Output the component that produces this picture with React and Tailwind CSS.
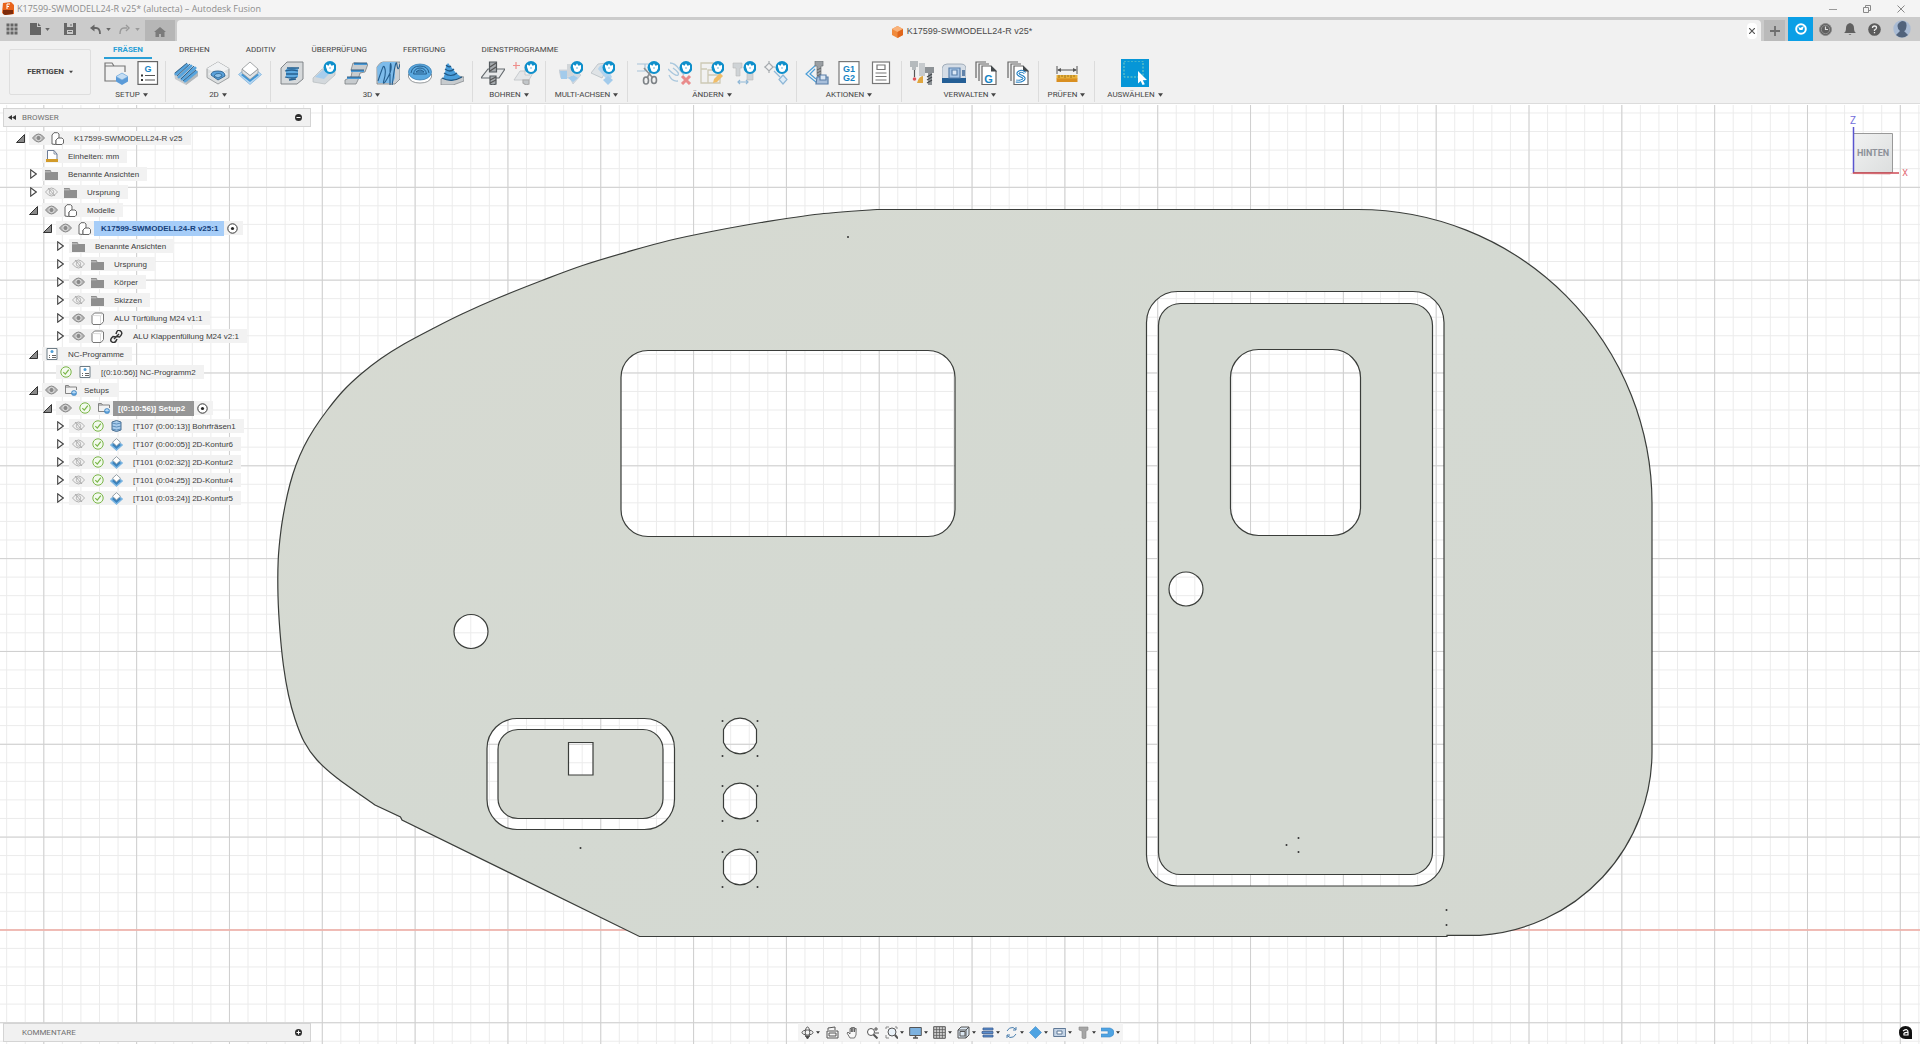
import React from "react";

const MID = "#6b7075";
const BLUE = "#5aa2dc";
const ACCENT = "#0e8fcb";

function Icon({ children, className = "size-6", box = "0 0 24 24" }) {
  return (
    <svg viewBox={box} className={`shrink-0 ${className}`} fill="none" stroke={MID} strokeWidth="1.2" aria-hidden="true">
      {children}
    </svg>
  );
}

function Caret({ className = "h-[4px] w-[6px]" }) {
  return (
    <svg viewBox="0 0 6 4" className={`shrink-0 ${className}`} fill="currentColor" aria-hidden="true">
      <path d="M0 0h6L3 4z" />
    </svg>
  );
}

// Extension badge that sits in the upper right corner of a tool icon
function Badge() {
  return (
    <g stroke="none">
      <circle cx="18" cy="6.500" r="6.500" fill={ACCENT} />
      <path d="M14 6V3.500l2.500 1.200L18 2.500l1.500 2.200L22 4v3.500l-1.500 2.700q-2.500 1.500-5 0z" fill="#fff" />
      <circle cx="18" cy="7" r="1" fill="#9fd0ea" />
    </g>
  );
}

/* ---------- ribbon icons ---------- */

const SetupIcon = () => (
  <Icon>
    <path d="M12 20H1V2h7l2 3h11v6M1 5h9" stroke="#777" />
    <path d="m18 12 6 3.500v5L18 24l-6-3.500v-5z" fill="#5b9bd8" stroke="none" />
    <path d="m18 12 6 3.500-6 3.500-6-3.500z" fill="#c4ddf3" stroke="#6fa7db" strokeWidth=".6" />
  </Icon>
);

const GSheetIcon = () => (
  <Icon>
    <rect x="2" y=".6" width="19.500" height="22.800" fill="#fff" stroke="#666" />
    <text x="12" y="10.500" textAnchor="middle" fontSize="9" fontWeight="700" fill="#1583c4" stroke="none" fontFamily="Liberation Sans, sans-serif">G</text>
    <path d="M9 14.500h10M9 19h10" stroke="#555" />
    <path d="M5 14.500h2M5 19h2" stroke="#333" strokeWidth="2" />
  </Icon>
);

const AdaptiveIcon = () => (
  <Icon>
    <path d="m0 12 11-9 13 7v5l-12 9L1 18z" fill="#c6cacd" stroke="none" />
    <path d="m12 24 12-9v-5L13 19z" fill="#b3b8bb" stroke="none" />
    <path d="m2 13 11-9M5 16 17 5M8 18 21 7M11 20 22 11" stroke="#57a4dd" strokeWidth="3" strokeLinecap="round" />
    <path d="m1 12 12-10M3 15 16 3M7 18 20 5M9 20 22 9" stroke="#2f5a80" strokeWidth=".9" />
  </Icon>
);

const PocketIcon = () => (
  <Icon>
    <path d="m12 1 11 6.500v9L12 23 1 16.500v-9z" fill="#dcdfe0" stroke="#8a8e91" strokeWidth=".8" />
    <path d="m12 1 11 6.500L12 14 1 7.500z" fill="#f1f2f3" stroke="none" />
    <path d="m2 13 10-6 10 6-10 6z" fill="#eef0f1" stroke="none" />
    <path d="M5 14q0-4 7-4t7 5l-7 4z" fill={BLUE} stroke="#2a5f8c" strokeWidth=".9" />
    <path d="M8 15q1-3 5-2.500 3 0 3 2.500l-4 2z" fill="#8dc1e8" stroke="#2a5f8c" strokeWidth=".8" />
  </Icon>
);

const ContourIcon = () => (
  <Icon>
    <path d="m12 4 11.500 9.500L12 23.500.5 13.500z" fill="#b6d7f1" stroke="#7fb4de" strokeWidth=".8" />
    <path d="m12 8 9 6-9 7-9-7z" fill="#3f95d6" stroke="none" />
    <path d="m4 8 8 6.500L20 8v4l-8 6.500L4 12z" fill="#dfe2e4" stroke="#8f9396" strokeWidth=".7" />
    <path d="m12 1 8 7-8 6.500L4 8z" fill="#fff" stroke="#8f9396" strokeWidth=".8" />
  </Icon>
);

const Adaptive3dIcon = () => (
  <Icon>
    <path d="M1 7 7 1h16v17l-6 5H1z" fill="#d6d9db" stroke="#777c80" strokeWidth=".9" />
    <path d="M6 8q6-3 12 0v8q-6 3-12 0z" fill="#5ea9e0" stroke="none" />
    <path d="M7 7h12M5 10q7-2 13 0M6 13h12M5 16q7 2 12 0M9 19l7-1" stroke="#27608f" strokeWidth="1.300" />
  </Icon>
);

const SteepIcon = () => (
  <Icon>
    <path d="m1 17 9-9 13 1v5l-10 9-12-2z" fill="#d3d8dc" stroke="#b5babd" strokeWidth=".7" />
    <path d="m3 16 8-7 9 1-8 8z" fill="#a8cdec" stroke="none" />
    <Badge />
  </Icon>
);

const ParallelIcon = () => (
  <Icon>
    <path d="m9 2 15 1-3 8-5 1-2 7-2 4H1v-4l6-3 1-5-1-2z" fill="#c7cbce" stroke="#7b8084" strokeWidth=".8" />
    <path d="M10 3h13M7 10h13M3 17h14" stroke="#4a99d6" strokeWidth="2.200" />
    <path d="M10 2h13M7 9h13M3 16h14" stroke="#244f75" strokeWidth=".9" />
  </Icon>
);

const ScallopIcon = () => (
  <Icon>
    <path d="M1 6q3-5 6-5h17v17l-5 5H1z" fill="#cdd1d4" stroke="#7b8084" strokeWidth=".8" />
    <path d="M1 6q5-5 6-5h13l-1 6v10q-2 5-4 5H2z" fill="#7dbbea" stroke="none" />
    <path d="M2 20Q6 8 7 6t2 2-1 11 3-1 4-14-1 15 3-1 4-14 3-1" stroke="#245d8d" strokeWidth="1.100" />
  </Icon>
);

const SpiralIcon = () => (
  <Icon>
    <path d="M.5 13v3q2 6 11.500 6t11.500-6v-3z" fill="#fff" stroke="#7b8084" strokeWidth=".8" />
    <ellipse cx="12" cy="11" rx="11.500" ry="8" fill="#5ba9e0" stroke="#3278ae" strokeWidth=".7" />
    <path d="M3 12q1-7 9-7t9 7M5.500 13h13q-1-6-6.500-6t-6.500 6M8 11q4-4 8 0z" stroke="#205682" strokeWidth=".9" />
  </Icon>
);

const RampIcon = () => (
  <Icon>
    <path d="m1 18 11-4 12 2v4l-11 4H1z" fill="#c7cbce" stroke="#7b8084" strokeWidth=".7" />
    <path d="m3 18 2-6 1-7 2-3 4 5 4 5 5 4-9 4z" fill="#4a9edb" stroke="none" />
    <path d="M6 4q3 3 5 1M5 8q5 4 9 0M4 12q7 5 13 0M2 17q10 5 20-1" stroke="#205682" />
  </Icon>
);

const DrillIcon = () => (
  <Icon>
    <path d="m0 17 7-9h17l-6 9z" fill="#e7e9ea" stroke="#656a6e" />
    <path d="M8.500 1h7v10h-7zM9 15h6v8l-3 1-3-1z" fill="#a5aaae" stroke="#555a5e" />
    <path d="m9 6 6-4M9 10l6-4M9 19l6-3M9 22l6-3" stroke="#555" />
  </Icon>
);

const HoleIcon = () => (
  <Icon>
    <path d="m1 19 6-9h14l-5 9zM12 4v10h5V4z" fill="#e4e6e8" stroke="#bfc3c6" strokeWidth=".8" />
    <path d="M10 19h6v4l-3 1-3-2z" fill="#c2c6c9" stroke="#aaa" />
    <path d="M3 1v7M0 4.500h7" stroke="#ee8d8a" />
    <Badge />
  </Icon>
);

const MultiAxisIcon = () => (
  <Icon>
    <path d="M0 9h16l6 5-8 9-3-6H2z" fill="#d0d9e2" stroke="#bcc5cc" strokeWidth=".6" />
    <path d="M1 10h7v8H2zM14 14l5 3-5 4-5-4z" fill="#a3cbeb" stroke="none" />
    <path d="M8 3h6v12H8z" fill="#d2d6d9" stroke="none" />
    <Badge />
  </Icon>
);

const SwarfIcon = () => (
  <Icon>
    <path d="M0 12 7 3l9-1v6l-5 9z" fill="#dfe3e6" stroke="#b8bec3" strokeWidth=".8" />
    <path d="M7 8q2-5 8-4l6 12-4 4z" fill="#b3d4ee" stroke="none" />
    <path d="m17 15 5 4-5 5-5-5z" fill="#a3cbeb" stroke="none" />
    <Badge />
  </Icon>
);

const TrimIcon = () => (
  <Icon>
    <path d="M1 3h14M1 10h8V3" stroke="#a8c4da" />
    <path d="m8 7 9 10M16 8 11 17" stroke="#8a8f93" strokeWidth="1.600" />
    <ellipse cx="10" cy="19.500" rx="2.500" ry="3.500" stroke="#7d8286" strokeWidth="1.600" />
    <ellipse cx="18" cy="19" rx="2.500" ry="3.500" stroke="#7d8286" strokeWidth="1.600" />
    <Badge />
  </Icon>
);

const DeletePassIcon = () => (
  <Icon>
    <path d="M2 2q5 0 9 6l5 6M0 8q8 8 10 6t-5-7M1 14q3 7 9 6" stroke="#a9c7dd" strokeWidth="1.300" />
    <path d="m14 15 8 8m0-8-8 8" stroke="#e98b8b" strokeWidth="3" />
    <Badge />
  </Icon>
);

const EditPassIcon = () => (
  <Icon>
    <path d="M1 2h12v7H8v5h12v8H1zM1 8h6M8 14v8" stroke="#cdc9b5" strokeWidth="1.300" />
    <path d="m13 22 1-4 6-6 3 3-6 6z" fill="#f0bd69" stroke="none" />
    <Badge />
  </Icon>
);

const ToolMoveIcon = () => (
  <Icon>
    <path d="M1 2h9v5H8v8H4V7H1z" fill="#cfd3d6" stroke="#bbb" strokeWidth=".6" />
    <path d="M15 10h6v9h-6z" fill="#cfd3d6" stroke="#bbb" strokeWidth=".6" />
    <path d="M6 21h10M8 19l-2 2 2 2M14 19l2 2-2 2" stroke="#8fb7d6" />
    <Badge />
  </Icon>
);

const PatternIcon = () => (
  <Icon>
    <path d="m5 2 4 4-4 4-4-4zM5 0v3M5 9v3M0 6h2M8 6h3" stroke="#a6abaf" />
    <path d="m10 10 6 6" stroke="#8fb7d6" />
    <path d="m19 14 4 4.500-4 4.500-4-4.500z" fill="#dcebf7" stroke="#8fb7d6" />
    <Badge />
  </Icon>
);

const SimulateIcon = () => (
  <Icon>
    <path d="M12 3 1 13l11 9 4-4M10 8l-5 5 6 5" stroke="#4d9fd8" />
    <path d="M10 0h8v5h-2v10l-3 1-1-2V5h-2z" fill="#9a9fa3" stroke="#6d7276" strokeWidth=".7" />
    <path d="m12 9 4-2m-4 5 4-2m-4 5 4-2" stroke="#555" strokeWidth=".8" />
    <path d="M12 16h11v7H11z" fill="#a8bfdb" stroke="#5a7fa8" />
    <path d="M15 14h6v5h-6z" fill="#d9e5f2" stroke="#5a7fa8" />
  </Icon>
);

const PostIcon = () => (
  <Icon>
    <rect x="2" y=".6" width="20" height="22.800" fill="#fff" stroke="#777" />
    <g fill="#1583c4" stroke="none" fontSize="9" fontWeight="700" fontFamily="Liberation Sans, sans-serif" textAnchor="middle">
      <text x="12" y="11">G1</text>
      <text x="12" y="20">G2</text>
    </g>
  </Icon>
);

const SheetIcon = () => (
  <Icon>
    <rect x="3.500" y="1" width="17" height="21.500" fill="#fff" stroke="#777" />
    <path d="M8 4h8v4.500H8zM6.500 12h11M6.500 15.500h11M6.500 19h11" stroke="#777" />
  </Icon>
);

const ToolLibIcon = () => (
  <Icon>
    <path d="M0 0h8v6H6v3H2V6H0z" fill="#b5babd" stroke="none" />
    <path d="M4.500 9v7" stroke="#555" />
    <circle cx="4.500" cy="18" r="1.800" fill="#e0555a" stroke="none" />
    <path d="M9 2h6v13H9z" fill="#c6cacd" stroke="none" />
    <path d="M7 22q2-7 6-7v7z" fill="#e0a63f" stroke="none" />
    <path d="M15 6h9v6h-2v12h-4V12h-3z" fill="#8d9296" stroke="none" />
    <path d="m17 16 5-3m-5 6 5-3m-5 6 5-3" stroke="#44494d" />
  </Icon>
);

const MachineIcon = () => (
  <Icon>
    <path d="M0 7q1-4 5-4h14q5 0 5 5v11H0z" fill="#d5dde6" stroke="#8795a5" strokeWidth=".7" />
    <path d="M0 17h24v5H0z" fill="#245f96" stroke="none" />
    <path d="M7 7h11v10H7z" fill="#a9c6e6" stroke="#5b80ab" />
    <path d="M10 9h5v5h-5z" fill="#dbe8f5" stroke="#5b80ab" />
    <path d="M20 9h3v6h-3z" fill="#6183aa" stroke="none" />
  </Icon>
);

function StackedSheets({ children }) {
  return (
    <Icon>
      <path d="M2 17V1h10M5 20V3h10" stroke="#666" />
      <path d="M8 5h9l5 5v13.500H8z" fill="#fff" stroke="#666" />
      <path d="M17 4.500v6h6z" fill="#44494d" stroke="none" />
      {children}
    </Icon>
  );
}

const PostLibIcon = () => (
  <StackedSheets>
    <text x="14.500" y="21.500" textAnchor="middle" fontSize="11" fontWeight="700" fill="#1583c4" stroke="none" fontFamily="Liberation Sans, sans-serif">G</text>
  </StackedSheets>
);

const TemplateIcon = () => (
  <StackedSheets>
    <path d="M19 12q-3-3-6-1t2 4 2 4-7 1" stroke="#2d86c6" strokeWidth="3" />
    <path d="M19 12q-3-3-6-1t2 4 2 4-7 1" stroke="#fff" strokeWidth="1" />
  </StackedSheets>
);

const MeasureIcon = () => (
  <Icon>
    <path d="M2 5v8M22 5v8M3 9h18" stroke="#555" strokeWidth="1" />
    <path d="m6 7-4 2 4 2zM18 7l4 2-4 2z" fill="#555" stroke="none" />
    <path d="M1.500 14h21v4h-21z" fill="#eab13a" stroke="none" />
    <path d="M1.500 17.500h21V21h-21z" fill="#d98f21" stroke="none" />
    <path d="M4 14v3m3-3v2m3-2v3m3-3v2m3-2v3m3-3v2" stroke="#8a6417" strokeWidth=".8" />
  </Icon>
);

const SelectIcon = () => (
  <span className="flex size-7 items-center justify-center bg-[#0696d7]">
    <Icon>
      <path d="M1 0h19v16H1z" stroke="#7fd0c0" strokeWidth="1" strokeDasharray="2 1.500" />
      <path d="m15 10 9 9-4.200.2 2 4-2.300.8-1.800-4L15 22.500z" fill="#fff" stroke="none" />
    </Icon>
  </span>
);

const GROUPS = [
  { label: "SETUP", width: "w-[68px]", icons: [SetupIcon, GSheetIcon] },
  { label: "2D", width: "w-[105px]", icons: [AdaptiveIcon, PocketIcon, ContourIcon] },
  { label: "3D", width: "w-[202px]", icons: [Adaptive3dIcon, SteepIcon, ParallelIcon, ScallopIcon, SpiralIcon, RampIcon] },
  { label: "BOHREN", width: "w-[73px]", icons: [DrillIcon, HoleIcon] },
  { label: "MULTI-ACHSEN", width: "w-[82px]", icons: [MultiAxisIcon, SwarfIcon] },
  { label: "ÄNDERN", width: "w-[169px]", icons: [TrimIcon, DeletePassIcon, EditPassIcon, ToolMoveIcon, PatternIcon] },
  { label: "AKTIONEN", width: "w-[105px]", icons: [SimulateIcon, PostIcon, SheetIcon] },
  { label: "VERWALTEN", width: "w-[137px]", icons: [ToolLibIcon, MachineIcon, PostLibIcon, TemplateIcon] },
  { label: "PRÜFEN", width: "w-[56px]", icons: [MeasureIcon] },
  { label: "AUSWÄHLEN", width: "w-[80px]", icons: [SelectIcon] },
];

const TABS = ["FRÄSEN", "DREHEN", "ADDITIV", "ÜBERPRÜFUNG", "FERTIGUNG", "DIENSTPROGRAMME"];

/* ---------- header ---------- */

function TitleBar() {
  return (
    <div className="flex h-[17px] items-center bg-[#f4f4f4] pl-[2px] pr-[14px]">
      <svg viewBox="0 0 12 13" className="h-[13px] w-3" aria-hidden="true">
        <path d="M1 1 9 0l3 3v9l-9 1-3-2z" fill="#e8641b" />
        <path d="M1 8h10v4l-8 1-2-1z" fill="#7d2b0c" />
        <path d="M5 7V2h3M5 4.500h2" stroke="#fff" fill="none" />
      </svg>
      <h1 className="ml-[3px] whitespace-nowrap pt-px font-[family-name:'Open_Sans',sans-serif] text-[9px] text-[#8c8c8c]">
        K17599-SWMODELL24-R v25* (alutecta) – Autodesk Fusion
      </h1>
      <div className="ml-auto flex gap-6">
        <button aria-label="Minimieren">
          <Icon className="size-[10px]" box="0 0 10 10"><path d="M1 5.500h8" stroke="#999" strokeWidth="1" /></Icon>
        </button>
        <button aria-label="Wiederherstellen">
          <Icon className="size-[10px]" box="0 0 10 10"><path d="M1.500 3.500h5v5h-5zM3.500 3V1.500h5v5H7" stroke="#888" strokeWidth="1" /></Icon>
        </button>
        <button aria-label="Schließen">
          <Icon className="size-[10px]" box="0 0 10 10"><path d="m1.500 1.500 7 7m0-7-7 7" stroke="#888" strokeWidth="1" /></Icon>
        </button>
      </div>
    </div>
  );
}

function TabStrip() {
  return (
    <div className="flex h-6 bg-[#cbcbcb] text-[#666]">
      <div className="flex w-[145px] items-center pl-[6px]">
        <button aria-label="Daten">
          <Icon className="size-3" box="0 0 12 12">
            <path d="M.5 2h11M.5 6h11M.5 10h11" stroke="#666" strokeWidth="3" strokeDasharray="3 1" />
          </Icon>
        </button>
        <button aria-label="Datei" className="ml-3 flex items-center gap-[4px]">
          <Icon className="h-3 w-[11px]" box="0 0 11 12">
            <path d="M0 0h7v4h4v8H0zM8 0l3 3H8z" fill="#666" stroke="none" />
          </Icon>
          <Caret className="h-[3px] w-[5px]" />
        </button>
        <button aria-label="Speichern" className="ml-[14px]">
          <Icon className="size-3" box="0 0 12 12">
            <path d="M0 0h12v12H0z" fill="#686868" stroke="none" />
            <path d="M3 0h6v4H3zM3 7h6v4H3z" fill="#cbcbcb" stroke="none" />
            <path d="M6.500 1h1v2h-1zM4 8h4v1H4z" fill="#686868" stroke="none" />
          </Icon>
        </button>
        <button aria-label="Rückgängig" className="ml-[14px] flex items-center gap-[5px]">
          <Icon className="size-[11px]" box="0 0 11 11">
            <path d="M3 4h3q4 0 4 6" stroke="#666" strokeWidth="1.800" />
            <path d="M0 4 4.500.5v7z" fill="#666" stroke="none" />
          </Icon>
          <Caret className="h-[3px] w-[5px]" />
        </button>
        <button aria-label="Wiederholen" className="ml-[8px] flex items-center gap-[5px] text-[#999]">
          <Icon className="size-[11px]" box="0 0 11 11">
            <path d="M8 4H5Q1 4 1 10" stroke="#999" strokeWidth="1.400" />
            <path d="M7 1 10 4 7 7" stroke="#999" strokeWidth="1.400" />
          </Icon>
          <Caret className="h-[3px] w-[5px]" />
        </button>
      </div>
      <button aria-label="Startseite" className="mt-[3px] flex w-[30px] items-center justify-center bg-[#b6b6b6] pt-[3px]">
        <Icon className="h-[10px] w-3" box="0 0 12 10">
          <path d="m6 0 6 5h-1.500v5H7V7H5v3H1.500V5H0z" fill="#7b7b7b" stroke="none" />
        </Icon>
      </button>
      <div className="ml-[2px] mt-[3px] flex flex-1 items-center justify-center rounded-t-sm bg-[#f1f1f1]">
        <div className="flex flex-1 items-center justify-center gap-[4px] pt-[2px]">
          <Icon className="h-3 w-[11px]" box="0 0 11 12">
            <path d="m5.500 0 5.500 3v6l-5.500 3L0 9V3z" fill="#f08a3c" stroke="none" />
            <path d="m5.500 0 5.500 3-5.500 3L0 3z" fill="#f9b27a" stroke="none" />
            <path d="m5.500 6 5.500-3v6l-5.500 3z" fill="#e0661c" stroke="none" />
          </Icon>
          <span className="text-[9px] text-[#4a4a4a]">K17599-SWMODELL24-R v25*</span>
        </div>
        <button aria-label="Tab schließen" className="mr-1 flex h-4 w-[10px] items-center justify-center rounded-sm bg-white">
          <Icon className="size-[6px]" box="0 0 6 6"><path d="m0 0 6 6m0-6-6 6" stroke="#555" /></Icon>
        </button>
      </div>
      <button aria-label="Neues Design" className="ml-[3px] mt-[3px] flex w-[21px] items-center justify-center bg-[#bababa]">
        <Icon className="size-[10px]" box="0 0 10 10"><path d="M5 0v10M0 5h10" stroke="#6e6e6e" strokeWidth="1.800" /></Icon>
      </button>
      <button aria-label="Erweiterungen" className="ml-[3px] flex w-[25px] items-center justify-center bg-[#0a9fe6]">
        <Icon className="size-3" box="0 0 12 12">
          <circle cx="6" cy="6" r="4.800" stroke="#fff" strokeWidth="2" />
          <path d="M3 3l2 2 4-2-1.500 4h-3z" fill="#fff" stroke="none" />
        </Icon>
      </button>
      <div className="flex items-center gap-3 pl-[6px] pr-[9px]">
        <button aria-label="Auftragsstatus">
          <Icon className="size-[13px]" box="0 0 13 13">
            <circle cx="6.500" cy="6.500" r="6" fill="#5f5f5f" stroke="#8b8b8b" strokeWidth="1" />
            <circle cx="6.500" cy="6.500" r="4.200" stroke="#999" strokeWidth=".8" />
            <path d="M6.500 3.500v3H9" stroke="#ddd" />
          </Icon>
        </button>
        <button aria-label="Benachrichtigungen">
          <Icon className="size-3" box="0 0 12 12">
            <path d="M6 0q4 1 4 5t2 5H0q2-1 2-5t4-5M4.500 11h3L6 12z" fill="#606060" stroke="none" />
          </Icon>
        </button>
        <button aria-label="Hilfe">
          <Icon className="size-[13px]" box="0 0 13 13">
            <circle cx="6.500" cy="6.500" r="6.300" fill="#5c5c5c" stroke="none" />
            <path d="M4.500 5q0-2 2-2t2 1.700Q8.500 6 6.500 7v1M6.500 9v1.300" stroke="#eee" strokeWidth="1.300" />
          </Icon>
        </button>
        <button aria-label="Konto">
          <Icon className="size-[18px]" box="0 0 18 18">
            <circle cx="9" cy="9" r="8.700" fill="#a9bbd4" stroke="none" />
            <path d="M9 1q5 0 4.500 5T11 11l4 4q-6 5-12 0l4-4Q4.500 9 4.500 6T9 1" fill="#51637c" stroke="none" />
          </Icon>
        </button>
      </div>
    </div>
  );
}

function Ribbon() {
  return (
    <div className="flex border-b border-[#dcdcdc] bg-[#f1f1f1] font-[family-name:Roboto,'Liberation_Sans',sans-serif] text-[8px] text-[#454545]">
      <button className="my-2 ml-[9px] flex h-[46px] w-[82px] items-center justify-center gap-[5px] rounded-[2px] border border-[#dedede] font-bold">
        FERTIGEN <Caret className="h-[4px] w-[4px]" />
      </button>
      <div className="ml-[7px] flex-1">
        <nav className="ml-[6px] flex h-[18px] gap-[18px]">
          {TABS.map((tab, i) => (
            <button
              key={tab}
              className={
                i === 0
                  ? "border-b-2 border-[#2a9fd6] px-[9px] pt-[2px] font-bold text-[#2a9fd6]"
                  : "border-b-2 border-transparent px-[9px] pt-[2px]"
              }
            >
              {tab}
            </button>
          ))}
        </nav>
        <div className="flex">
          {GROUPS.map((group, i) => (
            <div
              key={group.label}
              className={`${group.width} mt-[2px] flex h-[41px] flex-col items-center ${i < GROUPS.length - 1 ? "border-r border-[#dcdcdc]" : ""}`}
            >
              <div className="flex h-6 shrink-0 items-center">
                {group.icons.map((ToolIcon, j) => (
                  <button key={j} aria-label={`${group.label} ${j + 1}`} className="flex w-8 items-center justify-center">
                    <ToolIcon />
                  </button>
                ))}
              </div>
              <button className="flex h-[17px] shrink-0 items-center gap-[3px] whitespace-nowrap pt-[3px]">
                {group.label} <Caret className="h-[4px] w-[5px]" />
              </button>
            </div>
          ))}
        </div>
      </div>
    </div>
  );
}

/* ---------- browser tree ---------- */

const TREE_ICONS = {
  eye: (
    <Icon className="h-[10px] w-[13px]" box="0 0 13 10">
      <path d="M.5 5q6-8 12 0-6 8-12 0" fill="#b5b5b5" stroke="#8a8a8a" strokeWidth="1" />
      <circle cx="6.500" cy="5" r="2.600" fill="#8a8a8a" stroke="#eee" strokeWidth=".8" />
    </Icon>
  ),
  hidden: (
    <Icon className="h-[10px] w-[13px]" box="0 0 13 10">
      <path d="M.5 5q6-8 12 0-6 8-12 0" stroke="#b0b0b0" strokeWidth="1" />
      <circle cx="6.500" cy="5" r="2.300" stroke="#b0b0b0" strokeWidth=".9" />
      <path d="m3 1 7 8" stroke="#a5a5a5" strokeWidth=".9" />
    </Icon>
  ),
  folder: (
    <Icon className="h-[11px] w-[13px]" box="0 0 13 11">
      <path d="M0 1h5.500l1 2H13v8H0z" fill="#8f8f8f" stroke="none" />
      <path d="M0 2.800h5.500" stroke="#ddd" strokeWidth=".7" />
    </Icon>
  ),
  component: (
    <Icon className="size-[13px]" box="0 0 13 13">
      <path d="M1 3 3 .7h3.500L8 2v4L5 8v4l-1 .5L1 12z" fill="#fff" stroke="#666" strokeWidth="1" />
      <path d="m5 8 2-2h4l1.500 1.500V11L11 12.500H5z" fill="#fff" stroke="#666" strokeWidth="1" />
    </Icon>
  ),
  body: (
    <Icon className="size-[13px]" box="0 0 13 13">
      <path d="M1 3.500 3.500 1H11l1.500 1v7.500L10 12.500H2L1 11z" fill="#fff" stroke="#777" strokeWidth="1" />
      <path d="m1 3.500 8.500.2 2.500-2M9.500 4v8" stroke="#ccc" strokeWidth=".7" />
    </Icon>
  ),
  link: (
    <Icon className="size-[13px]" box="0 0 13 13">
      <path d="m6 7-3-.5Q-1 10 2 12t5-3M6.500 6.500l3 .5q4-3.500 1-6T6 4" stroke="#333" strokeWidth="1.500" />
      <path d="m4 9 5-5" stroke="#333" strokeWidth="1.500" />
    </Icon>
  ),
  units: (
    <Icon className="size-3" box="0 0 12 12">
      <path d="M1.500 9V.5H8L11 4v5" fill="#fff" stroke="#6d7c96" strokeWidth="1" />
      <path d="M8 .5V4h3" stroke="#6d7c96" strokeWidth=".8" />
      <path d="M0 9h12v3H0z" fill="#d29b2a" stroke="none" />
    </Icon>
  ),
  nc: (
    <Icon className="size-3" box="0 0 12 12">
      <path d="M1 .5h10v11H1z" fill="#fff" stroke="#6d7c86" strokeWidth="1" />
      <circle cx="6" cy="3.500" r="1.500" fill="#4d9fd8" stroke="none" />
      <path d="M3 7.500h1m2 0h4M3 9.500h1m2 0h4" stroke="#555" strokeWidth=".9" />
    </Icon>
  ),
  check: (
    <Icon className="size-3" box="0 0 12 12">
      <circle cx="6" cy="6" r="5.200" fill="#f3faee" stroke="#7ab648" strokeWidth="1" />
      <path d="m3.300 6.200 2 2 3.500-4.500" stroke="#7ab648" strokeWidth="1.200" />
    </Icon>
  ),
  setup: (
    <Icon className="size-3" box="0 0 12 12">
      <path d="M7 9.500H.5V1.500h3l1 1.500h7v3M.5 3h4" stroke="#777" strokeWidth=".9" />
      <circle cx="9" cy="9" r="2.600" fill="#5b9fd8" stroke="#3d7fb8" strokeWidth=".5" />
      <path d="M6.800 8.500 9 7l2.200 1.500L9 9.500z" fill="#bcdaf3" stroke="none" />
    </Icon>
  ),
  drill: (
    <Icon className="h-3 w-[11px]" box="0 0 11 12">
      <path d="M1 2v8q4.500 3 9 0V2q-4.500-3-9 0" fill="#a8ccec" stroke="#4b6f90" strokeWidth="1" />
      <path d="M1 3q4.500 2 9 0M1 6q4.500 2 9 0M1 9q4.500 2 9 0" stroke="#4b7fae" strokeWidth=".8" />
    </Icon>
  ),
  contour: (
    <Icon className="size-[13px]" box="0 0 13 13">
      <path d="m6.500 2 6.200 5-6.200 5.500L.3 7z" fill="#7db9e8" stroke="#5a9fd4" strokeWidth=".6" />
      <path d="m6.500 4 4.500 3-4.500 4L2 7z" fill="#3a82bd" stroke="none" />
      <path d="m6.500.6 4 3.700-4 3.700-4-3.700z" fill="#fff" stroke="#7f8b94" strokeWidth=".8" />
    </Icon>
  ),
};

const INDENT = ["pl-[11px]", "pl-[24px]", "pl-[38px]", "pl-[51px]"];

const TREE = [
  { level: 0, arrow: "open", icons: ["eye", "component"], label: "K17599-SWMODELL24-R v25" },
  { level: 1, icons: ["units"], label: "Einheiten: mm" },
  { level: 1, arrow: "closed", icons: ["folder"], label: "Benannte Ansichten" },
  { level: 1, arrow: "closed", icons: ["hidden", "folder"], label: "Ursprung" },
  { level: 1, arrow: "open", icons: ["eye", "component"], label: "Modelle" },
  { level: 2, arrow: "open", icons: ["eye", "component"], label: "K17599-SWMODELL24-R v25:1", mark: "blue" },
  { level: 3, arrow: "closed", icons: ["folder"], label: "Benannte Ansichten" },
  { level: 3, arrow: "closed", icons: ["hidden", "folder"], label: "Ursprung" },
  { level: 3, arrow: "closed", icons: ["eye", "folder"], label: "Körper" },
  { level: 3, arrow: "closed", icons: ["hidden", "folder"], label: "Skizzen" },
  { level: 3, arrow: "closed", icons: ["eye", "body"], label: "ALU Türfüllung M24 v1:1" },
  { level: 3, arrow: "closed", icons: ["eye", "body", "link"], label: "ALU Klappenfüllung M24 v2:1" },
  { level: 1, arrow: "open", icons: ["nc"], label: "NC-Programme" },
  { level: 2, icons: ["check", "nc"], label: "[(0:10:56)] NC-Programm2" },
  { level: 1, arrow: "open", icons: ["eye", "setup"], label: "Setups", mark: "tight" },
  { level: 2, arrow: "open", icons: ["eye", "check", "setup"], label: "[(0:10:56)] Setup2", mark: "gray" },
  { level: 3, arrow: "closed", icons: ["hidden", "check", "drill"], label: "[T107 (0:00:13)] Bohrfräsen1" },
  { level: 3, arrow: "closed", icons: ["hidden", "check", "contour"], label: "[T107 (0:00:05)] 2D-Kontur6" },
  { level: 3, arrow: "closed", icons: ["hidden", "check", "contour"], label: "[T101 (0:02:32)] 2D-Kontur2" },
  { level: 3, arrow: "closed", icons: ["hidden", "check", "contour"], label: "[T101 (0:04:25)] 2D-Kontur4" },
  { level: 3, arrow: "closed", icons: ["hidden", "check", "contour"], label: "[T101 (0:03:24)] 2D-Kontur5" },
];

const LABEL_STYLE = {
  none: "pl-[7px] pr-[6px] text-[#3c3c3c]",
  tight: "pl-1 pr-[8px] text-[#3c3c3c]",
  blue: "bg-[#a6cdf8] pl-[7px] pr-[6px] font-bold text-[#15407a]",
  gray: "bg-[#969696] pl-[5px] pr-[9px] font-bold text-white",
};

function TreeArrow({ kind }) {
  if (!kind) return <span className="w-[18px] shrink-0" />;
  return (
    <button aria-label={kind === "open" ? "Zuklappen" : "Aufklappen"} className="flex w-[18px] shrink-0 justify-center">
      {kind === "open" ? (
        <Icon className="size-[9px]" box="0 0 9 9"><path d="M8.500.5v8h-8z" fill="#8a8a8a" stroke="#333" strokeWidth="1" /></Icon>
      ) : (
        <Icon className="h-[10px] w-[7px]" box="0 0 7 10"><path d="M.7.8v8.400L6.300 5z" fill="#fff" stroke="#444" strokeWidth="1.100" /></Icon>
      )}
    </button>
  );
}

function TreeRow({ level, arrow, icons, label, mark }) {
  const selected = mark === "blue" || mark === "gray";
  return (
    <li className={`flex h-[18px] items-center ${INDENT[level]}`}>
      <TreeArrow kind={arrow} />
      <div className="flex h-[14px] items-center bg-[#f2f2f2] pr-[2px]">
        {icons.map((name, i) => (
          <span key={i} className="flex w-[19px] justify-center">{TREE_ICONS[name]}</span>
        ))}
        <span className={`flex h-[15px] items-center whitespace-nowrap pt-px text-[8px] ${LABEL_STYLE[mark || "none"]}`}>{label}</span>
        {selected && (
          <button aria-label="Aktivieren" className="mx-[3px]">
            <Icon className="size-[11px]" box="0 0 11 11">
              <circle cx="5.500" cy="5.500" r="4.700" fill="#fff" stroke="#333" strokeWidth="1" />
              <circle cx="5.500" cy="5.500" r="1.600" fill="#222" stroke="none" />
            </Icon>
          </button>
        )}
      </div>
    </li>
  );
}

function PanelBar({ title, arrows, sign }) {
  return (
    <div className="ml-[3px] flex h-[19px] w-[308px] items-center border border-[#d4d4d4] bg-[#f1f1f1] pl-1 pr-2 font-[family-name:Roboto,'Liberation_Sans',sans-serif] text-[8px] text-[#707070]">
      <span className="w-[14px]">
        {arrows && (
          <Icon className="h-[5px] w-[8px]" box="0 0 8 5"><path d="M4 0v5L0 2.500zM8 0v5L4 2.500z" fill="#333" stroke="none" /></Icon>
        )}
      </span>
      <h2 className="flex-1">{title}</h2>
      <button aria-label={`${title} umschalten`}>
        <Icon className="size-[7px]" box="0 0 7 7">
          <circle cx="3.500" cy="3.500" r="3.500" fill="#2e2e2e" stroke="none" />
          <path d={sign === "plus" ? "M1.500 3.500h4M3.500 1.500v4" : "M1.500 3.500h4"} stroke="#fff" strokeWidth="1" />
        </Icon>
      </button>
    </div>
  );
}

/* ---------- canvas ---------- */

const roundRect = (x1, y1, x2, y2, r) =>
  `M${x1 + r} ${y1}H${x2 - r}A${r} ${r} 0 0 1 ${x2} ${y1 + r}V${y2 - r}A${r} ${r} 0 0 1 ${x2 - r} ${y2}H${x1 + r}A${r} ${r} 0 0 1 ${x1} ${y2 - r}V${y1 + r}A${r} ${r} 0 0 1 ${x1 + r} ${y1}Z`;

const circle = (x, y, r) => `M${x - r} ${y}a${r} ${r} 0 1 0 ${2 * r} 0a${r} ${r} 0 1 0 ${-2 * r} 0Z`;

// Round hole with its left and right side cut flat
const flatHole = (y) => `M723.500 ${y - 6.500}A17.700 17.700 0 0 1 756.500 ${y - 6.500}V${y + 6.500}A17.700 17.700 0 0 1 723.500 ${y + 6.500}Z`;

// Smooth curve through all points
function spline(points) {
  let d = "";
  for (let i = 0; i < points.length - 1; i++) {
    const a = points[i - 1] || points[i];
    const b = points[i];
    const c = points[i + 1];
    const e = points[i + 2] || c;
    d += `C${b[0] + (c[0] - a[0]) / 6} ${b[1] + (c[1] - a[1]) / 6} ${c[0] - (e[0] - b[0]) / 6} ${c[1] - (e[1] - b[1]) / 6} ${c[0]} ${c[1]}`;
  }
  return d;
}

const NOSE = [
  [375, 805], [337, 778], [317, 760], [304, 741.5], [295, 719], [288.5, 695], [283.5, 666], [280, 632], [278, 596],
  [278.2, 560], [281, 530], [285, 506], [290, 484], [296, 465], [304, 446.5], [314, 429], [327, 410.5], [343, 391],
  [361, 374], [381, 358.5], [404, 344], [433, 328.5], [462, 314], [498, 298], [542, 280.5], [582.5, 265.5],
  [627, 252], [669, 240.5], [714, 231], [761, 222.5], [820, 214], [877, 209.5],
];

const VENTS = [736, 801, 867];

const OUTLINE =
  "M877 209.500H1358A294 294 0 0 1 1652 503.500V751A184 184 0 0 1 1480 935.300H1447V936.500H639.500L402 820L400.500 817L375 805" +
  spline(NOSE) +
  "Z";

const SHELL = [
  OUTLINE,
  roundRect(621, 350.5, 955, 536.5, 27),
  circle(471, 631.5, 17),
  roundRect(487, 718.5, 674.5, 829.5, 30),
  roundRect(1146.5, 291.5, 1444, 886, 31),
  ...VENTS.map(flatHole),
].join("");

const HATCH = roundRect(498, 729.5, 663, 818.5, 20) + "M568.500 742.500H593V775H568.500Z";

const DOOR = roundRect(1158.5, 303.5, 1432.5, 874.5, 22) + roundRect(1230.5, 349.5, 1360.5, 535.5, 28) + circle(1186, 589, 17);

const DOTS = [
  [848, 237], [580.5, 848], [1286.5, 845], [1298.5, 838], [1298.5, 852], [1446.5, 910], [1446.5, 925],
  ...VENTS.flatMap((y) => [[722.5, y - 15], [757.5, y - 15], [722.5, y + 20], [757.5, y + 20]]),
];

function Canvas() {
  return (
    <svg viewBox="0 104 1920 940" preserveAspectRatio="xMidYMid slice" className="absolute inset-0 h-full w-full" aria-label="Seitenwand">
      <defs>
        <pattern id="minor" x="34.500" y="-7.700" width="18.565" height="18.565" patternUnits="userSpaceOnUse">
          <path d="M9.300 0V18.565M0 9.300H18.565" stroke="#ebebeb" strokeWidth="1" />
        </pattern>
        <pattern id="major" x="-2.600" y="48.100" width="92.825" height="92.825" patternUnits="userSpaceOnUse">
          <path d="M46.400 0V92.825M0 46.400H92.825" stroke="#cfcfcf" strokeWidth="1" />
        </pattern>
        <linearGradient id="sheet" x1="0" y1="0" x2="1" y2="1">
          <stop offset="0" stopColor="#d7dad2" />
          <stop offset="0.500" stopColor="#d4d9d2" />
          <stop offset="1" stopColor="#d4d8d1" />
        </linearGradient>
      </defs>
      <rect x="0" y="104" width="1920" height="940" fill="#fff" />
      <rect x="0" y="105" width="1920" height="939" fill="url(#minor)" />
      <rect x="0" y="105" width="1920" height="939" fill="url(#major)" />
      <path d="M0 930H1920" stroke="#f3aea6" strokeWidth="1.400" />
      <g fillRule="evenodd" stroke="#3a3d3a" strokeWidth="1.200">
        <path d={SHELL} fill="url(#sheet)" />
        <path d={HATCH} fill="#d4d8d1" />
        <path d={DOOR} fill="#d4d9d2" />
      </g>
      {DOTS.map(([x, y]) => (
        <circle key={`${x}-${y}`} cx={x} cy={y} r="1" fill="#333" />
      ))}
    </svg>
  );
}

function ViewCube() {
  return (
    <svg viewBox="0 0 66 66" className="absolute right-2 top-2 h-[66px] w-[66px]" role="img" aria-label="Ansicht hinten">
      <defs>
        <linearGradient id="cube" x1="0" y1="0" x2="1" y2="1">
          <stop offset="0" stopColor="#f1f2f2" />
          <stop offset="1" stopColor="#dcdede" />
        </linearGradient>
      </defs>
      <path d="M4 62 8 60h38l-2 3z" fill="#e3b5b5" opacity=".6" />
      <path d="M7.500 21.500H46.500V60.500H7.500z" fill="url(#cube)" stroke="#999" strokeWidth="1" />
      <path d="M7.500 15V61" stroke="#5a55cf" strokeWidth="1.500" />
      <path d="M7 61H53" stroke="#cf4a55" strokeWidth="1.500" />
      <g fontFamily="Roboto, Liberation Sans, sans-serif" textAnchor="middle">
        <text x="27" y="44" fontSize="9" fontWeight="700" fill="#8d9199">HINTEN</text>
        <text x="7" y="12" fontSize="10" fill="#716ddb">Z</text>
        <text x="59" y="64" fontSize="9" fill="#e36a72">X</text>
      </g>
    </svg>
  );
}

/* ---------- bottom navigation ---------- */

const NAV = [
  { name: "Orbit", caret: true, art: <><ellipse cx="6.500" cy="6.500" rx="5.500" ry="2.500" /><ellipse cx="6.500" cy="6.500" rx="2.200" ry="5.500" /><path d="M4.500 10 6.500 13l2-3z" fill="#444" /></> },
  { name: "Ansehen nach", art: <><path d="M1 5h11v7H1zM3 7h7v3H3z" /><path d="M2 4V2l7-1v3" /></> },
  { name: "Pan", art: <path d="M4 12 1 7l1-1 2 2V2.500h1.300V6 1.500h1.500V6L7 1.500h1.500V6l.5-3.500h1.200L10 9l-1.500 3z" fill="#f7f7f7" strokeWidth=".8" /> },
  { name: "Zoom", art: <><circle cx="5" cy="6" r="3.500" fill="#fff" /><path d="m7.500 8.500 4 4" strokeWidth="2" /><path d="M10 1v4M8 3h4M9 7h4" /></> },
  { name: "Fenster", caret: true, art: <><circle cx="7" cy="6" r="4" fill="#e9f1f8" /><path d="m10 9 3 3.500" strokeWidth="2" /><path d="M1 3V1h3M1 9v3h3M10 1h2v2" stroke="#888" /></> },
  { name: "Anzeige", caret: true, art: <><path d="M.7 1.500h11.600v8H.7z" fill="#7db2e0" /><path d="M4 12h5M6.500 9.500V12" strokeWidth="1.500" /></> },
  { name: "Raster", caret: true, art: <><path d="M.7.700h11.600v11.600H.7z" fill="#ccc" /><path d="M3.600 1v11M6.500 1v11M9.400 1v11M1 3.600h11M1 6.500h11M1 9.400h11" strokeWidth=".7" /></> },
  { name: "Ansichtsfenster", caret: true, art: <><path d="m1 4 3-3h8v8l-3 3H1z" fill="#dbe7f2" /><path d="M3 5.500h5V10H3zM9 4v8M1 4h8l3-3" /></> },
  { name: "Schnitt", caret: true, art: <path d="M2 2h10v2H2zM1 5.500h11v2H1zM2 9h10v2H2z" fill="#5b8fd0" stroke="#3d5d90" strokeWidth=".8" /> },
  { name: "Aktualisieren", caret: true, art: <path d="M2 5q2-4 6-3.500l3 2M11 1v3H8M11 8q-2 4-6 3.500l-3-2M2 12V9h3" stroke="#4b7fae" /> },
  { name: "Werkstück", caret: true, art: <path d="m6.500.5 6 6-6 6-6-6z" fill="#4ea3e2" stroke="#3f8cca" strokeWidth=".6" /> },
  { name: "Maschine", caret: true, art: <><path d="M.7 2.500h12v8H.7z" fill="#c4d4e6" stroke="#5f7896" /><path d="M4 5h5v3H4z" fill="#fff" stroke="#5f7896" /></> },
  { name: "Werkzeug", caret: true, art: <path d="M2 1h9v3L9 5v7l-2 1-2-1V5L2 4z" fill="#a5a5a5" stroke="#888" strokeWidth=".6" /> },
  { name: "Werkzeugweg", caret: true, art: <path d="M0 2h9q4 1 4 4.500T9 11H0V8h7V5H0z" fill="#4ea3e2" stroke="#3f8cca" strokeWidth=".6" /> },
];

function NavBar() {
  return (
    <div className="flex h-[18px] items-center gap-[3px] self-start bg-[#f4f4f4] px-[2px]">
      {NAV.map((item) => (
        <button key={item.name} aria-label={item.name} className="flex h-[18px] items-center gap-[2px] px-px text-[#333]">
          <Icon className={item.caret ? "size-[13px]" : "mx-px size-[13px]"} box="0 0 13 13">
            <g stroke="#555" strokeWidth="1">{item.art}</g>
          </Icon>
          {item.caret && <Caret className="h-[3px] w-[4px]" />}
        </button>
      ))}
    </div>
  );
}

export default function App() {
  return (
    <div className="flex min-h-screen flex-col bg-white font-[family-name:'Liberation_Sans',sans-serif]">
      <header>
        <TitleBar />
        <TabStrip />
        <Ribbon />
      </header>
      <main className="relative flex flex-1 flex-col">
        <Canvas />
        <ViewCube />
        <aside className="relative pt-1">
          <PanelBar title="BROWSER" arrows sign="minus" />
          <ul className="pt-[2px]">
            {TREE.map((row, i) => (
              <TreeRow key={i} {...row} />
            ))}
          </ul>
        </aside>
        <footer className="relative mt-auto grid grid-cols-[1fr_auto_1fr] items-center pb-[2px]">
          <PanelBar title="KOMMENTARE" sign="plus" />
          <NavBar />
          <button aria-label="Assistent" className="mr-2 justify-self-end">
            <Icon className="size-[13px]" box="0 0 13 13">
              <path d="M6.500 0Q13 0 13 6.500V13H6.500Q0 13 0 6.500T6.500 0" fill="#111" stroke="none" />
              <path d="M4 5q5-3 5 1v3H5q-1-3 4-2.500" stroke="#fff" />
            </Icon>
          </button>
        </footer>
      </main>
    </div>
  );
}
